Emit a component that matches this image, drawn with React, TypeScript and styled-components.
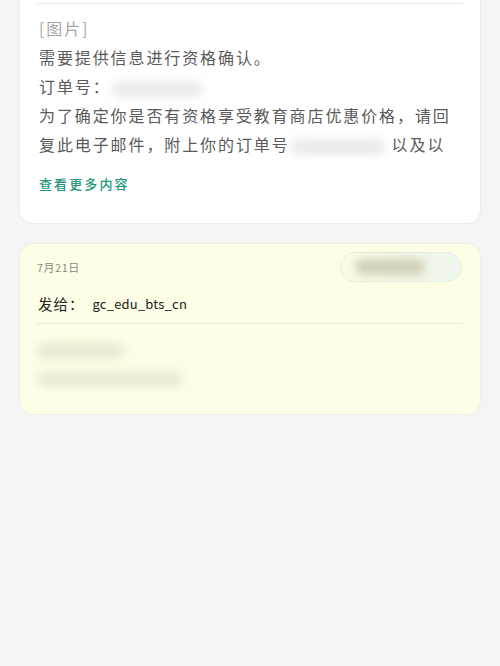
import React from "react";
import styled, { createGlobalStyle } from "styled-components";

const GlobalStyle = createGlobalStyle`
  html, body {
    margin: 0;
    padding: 0;
    background: #f4f4f4;
  }
  body {
    font-family: "Noto Sans CJK SC", "Noto Sans", sans-serif;
  }
`;

const Page = styled.div`
  padding: 0 19px;
  display: flex;
  flex-direction: column;
  gap: 19px;
`;

const MailCard = styled.div`
  background: #ffffff;
  border-radius: 0 0 14px 14px;
  border: 1px solid #ececec;
  border-top: none;
  padding: 3px 17px 30px;
`;

const Divider = styled.div`
  height: 1px;
  background: #e9e9e9;
`;

const Body = styled.div`
  padding: 10px 2px 0;
  display: flex;
  flex-direction: column;
`;

const Line = styled.div<{ $muted?: boolean }>`
  font-size: 16px;
  line-height: 29px;
  letter-spacing: 1.9px;
  color: ${(p) => (p.$muted ? "#a5a5a5" : "#5a5a5a")};
  white-space: nowrap;
`;

const Blur = styled.span<{ $w: number; $tone?: string }>`
  display: inline-block;
  vertical-align: middle;
  width: ${(p) => p.$w}px;
  height: 16px;
  border-radius: 8px;
  background: ${(p) => p.$tone ?? "#e6e6e6"};
  filter: blur(4px);
`;

const Trailing = styled.span`
  margin-left: 6px;
`;

const MoreLink = styled.div`
  margin-top: 15px;
  font-size: 13px;
  letter-spacing: 2.1px;
  font-weight: 500;
  color: #23957a;
`;

const SentCard = styled.div`
  background: #fefde5;
  border: 1px solid #efefe0;
  border-radius: 14px;
  padding: 8px 17px 27px;
`;

const MetaRow = styled.div`
  display: flex;
  align-items: center;
  justify-content: space-between;
`;

const DateText = styled.span`
  font-size: 11px;
  color: #8a8a80;
  letter-spacing: 0.5px;
`;

const StatusPill = styled.div`
  width: 122px;
  height: 30px;
  box-sizing: border-box;
  border-radius: 15px;
  border: 1px solid #e8eee0;
  background: linear-gradient(90deg, #fbfbe6 0%, #f1f6e8 70%, #eef8ee 100%);
  display: flex;
  align-items: center;
  padding-left: 14px;
  margin-right: 1px;
`;

const ToRow = styled.div`
  display: flex;
  align-items: center;
  margin-top: 11px;
  padding: 0 1px 9px;
  border-bottom: 1px solid #ecebd4;
  font-size: 14.5px;
  color: #222;
`;

const ToLabel = styled.span`
  letter-spacing: 1px;
  margin-right: 8px;
`;

const Address = styled.span`
  font-size: 13px;
  letter-spacing: 0.2px;
`;

const Preview = styled.div`
  display: flex;
  flex-direction: column;
  gap: 12px;
  padding-top: 19px;
`;

export default function App() {
  return (
    <>
      <GlobalStyle />
      <Page>
        <MailCard>
          <Divider />
          <Body>
            <Line $muted>[图片]</Line>
            <Line>需要提供信息进行资格确认。</Line>
            <Line>
              订单号：<Blur $w={92} $tone="#ececec" />
            </Line>
            <Line>为了确定你是否有资格享受教育商店优惠价格，请回</Line>
            <Line>
              复此电子邮件，附上你的订单号<Blur $w={96} $tone="#ebebeb" />
              <Trailing>以及以</Trailing>
            </Line>
            <MoreLink>查看更多内容</MoreLink>
          </Body>
        </MailCard>

        <SentCard>
          <MetaRow>
            <DateText>7月21日</DateText>
            <StatusPill>
              <Blur $w={70} $tone="#d2d0b8" />
            </StatusPill>
          </MetaRow>
          <ToRow>
            <ToLabel>发给：</ToLabel>
            <Address>gc_edu_bts_cn</Address>
          </ToRow>
          <Preview>
            <Blur $w={88} $tone="#ebead2" />
            <Blur $w={146} $tone="#ecebd5" />
          </Preview>
        </SentCard>
      </Page>
    </>
  );
}
